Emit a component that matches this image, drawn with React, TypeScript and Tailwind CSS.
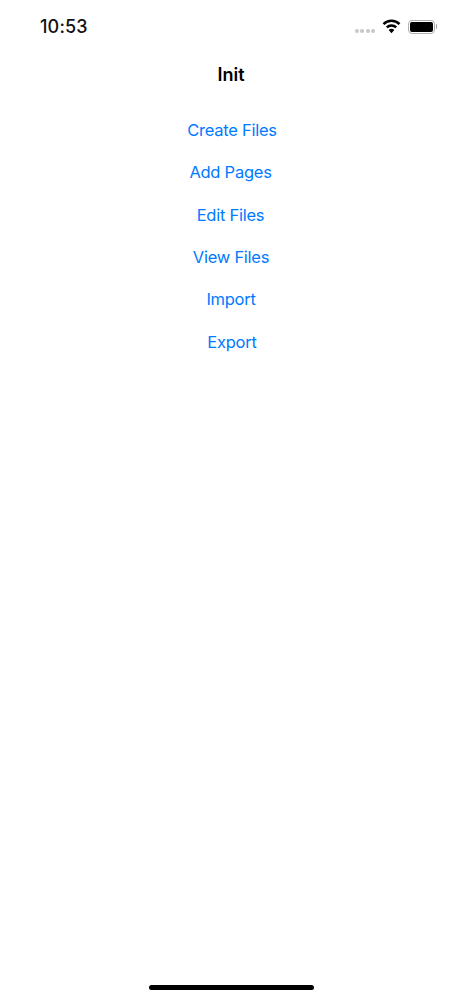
export default function App() {
  const items = [
    { label: "Create Files", cls: "pl-[2px]" },
    { label: "Add Pages", cls: "pr-[1px]" },
    { label: "Edit Files", cls: "pr-[1px]" },
    { label: "View Files", cls: "" },
    { label: "Import", cls: "" },
    { label: "Export", cls: "pl-[2px]" },
  ];
  return (
    <div className="w-[462px] h-[1000px] bg-white flex flex-col font-['Inter',sans-serif] relative overflow-hidden">
      <div className="h-[52px] flex items-center pl-[40px] pr-[25px] pt-[1px]">
        <span className="text-[18px] leading-[22px] font-[550] text-[#111] tracking-[0.15px]">10:53</span>
        <div className="flex-1" />
        <div className="flex items-center">
          <div className="flex gap-[1.5px] mt-[9px] mr-[7px]">
            <span className="w-[4px] h-[4px] rounded-full bg-[#c8c8c8]" />
            <span className="w-[4px] h-[4px] rounded-full bg-[#c8c8c8]" />
            <span className="w-[4px] h-[4px] rounded-full bg-[#c8c8c8]" />
            <span className="w-[4px] h-[4px] rounded-full bg-[#c8c8c8]" />
          </div>
          <svg width="19" height="15" viewBox="0 0 19 15" className="mr-[7px] -mt-[1px]">
            <path d="M1.500 5.200C3.600 3.100 6.400 1.800 9.500 1.800s5.900 1.300 8 3.400" fill="none" stroke="#000" strokeWidth="2.500" />
            <path d="M4.800 8.300C6 7.100 7.700 6.400 9.500 6.400s3.500.7 4.700 1.900" fill="none" stroke="#000" strokeWidth="2.500" />
            <path d="M9.500 9.800c-1.100 0-2.100.4-2.800 1.100l2.800 3.300 2.800-3.300c-.7-.7-1.700-1.100-2.800-1.100z" fill="#000" />
          </svg>
          <div className="flex items-center">
            <div className="w-[27px] h-[14px] rounded-[4px] border-[1.5px] border-[#b0b0b0] p-[1px]">
              <div className="w-full h-full rounded-[2px] bg-black" />
            </div>
            <div className="w-[1.500px] h-[5px] ml-[0.500px] rounded-r-[1px] bg-[#a0a0a0]" />
          </div>
        </div>
      </div>
      <div className="h-[44px] flex items-center justify-center pt-[2px]">
        <span className="text-[18px] leading-[22px] font-semibold text-black">Init</span>
      </div>
      <div className="flex flex-col items-center pt-[13px]">
        {items.map((it) => (
          <div key={it.label} className={`h-[42.400px] flex items-center text-[16.500px] tracking-[-0.25px] text-[#007aff] ${it.cls}`}>
            {it.label}
          </div>
        ))}
      </div>
      <div className="absolute bottom-[10px] left-[149px] w-[165px] h-[5px] rounded-full bg-black" />
    </div>
  );
}
